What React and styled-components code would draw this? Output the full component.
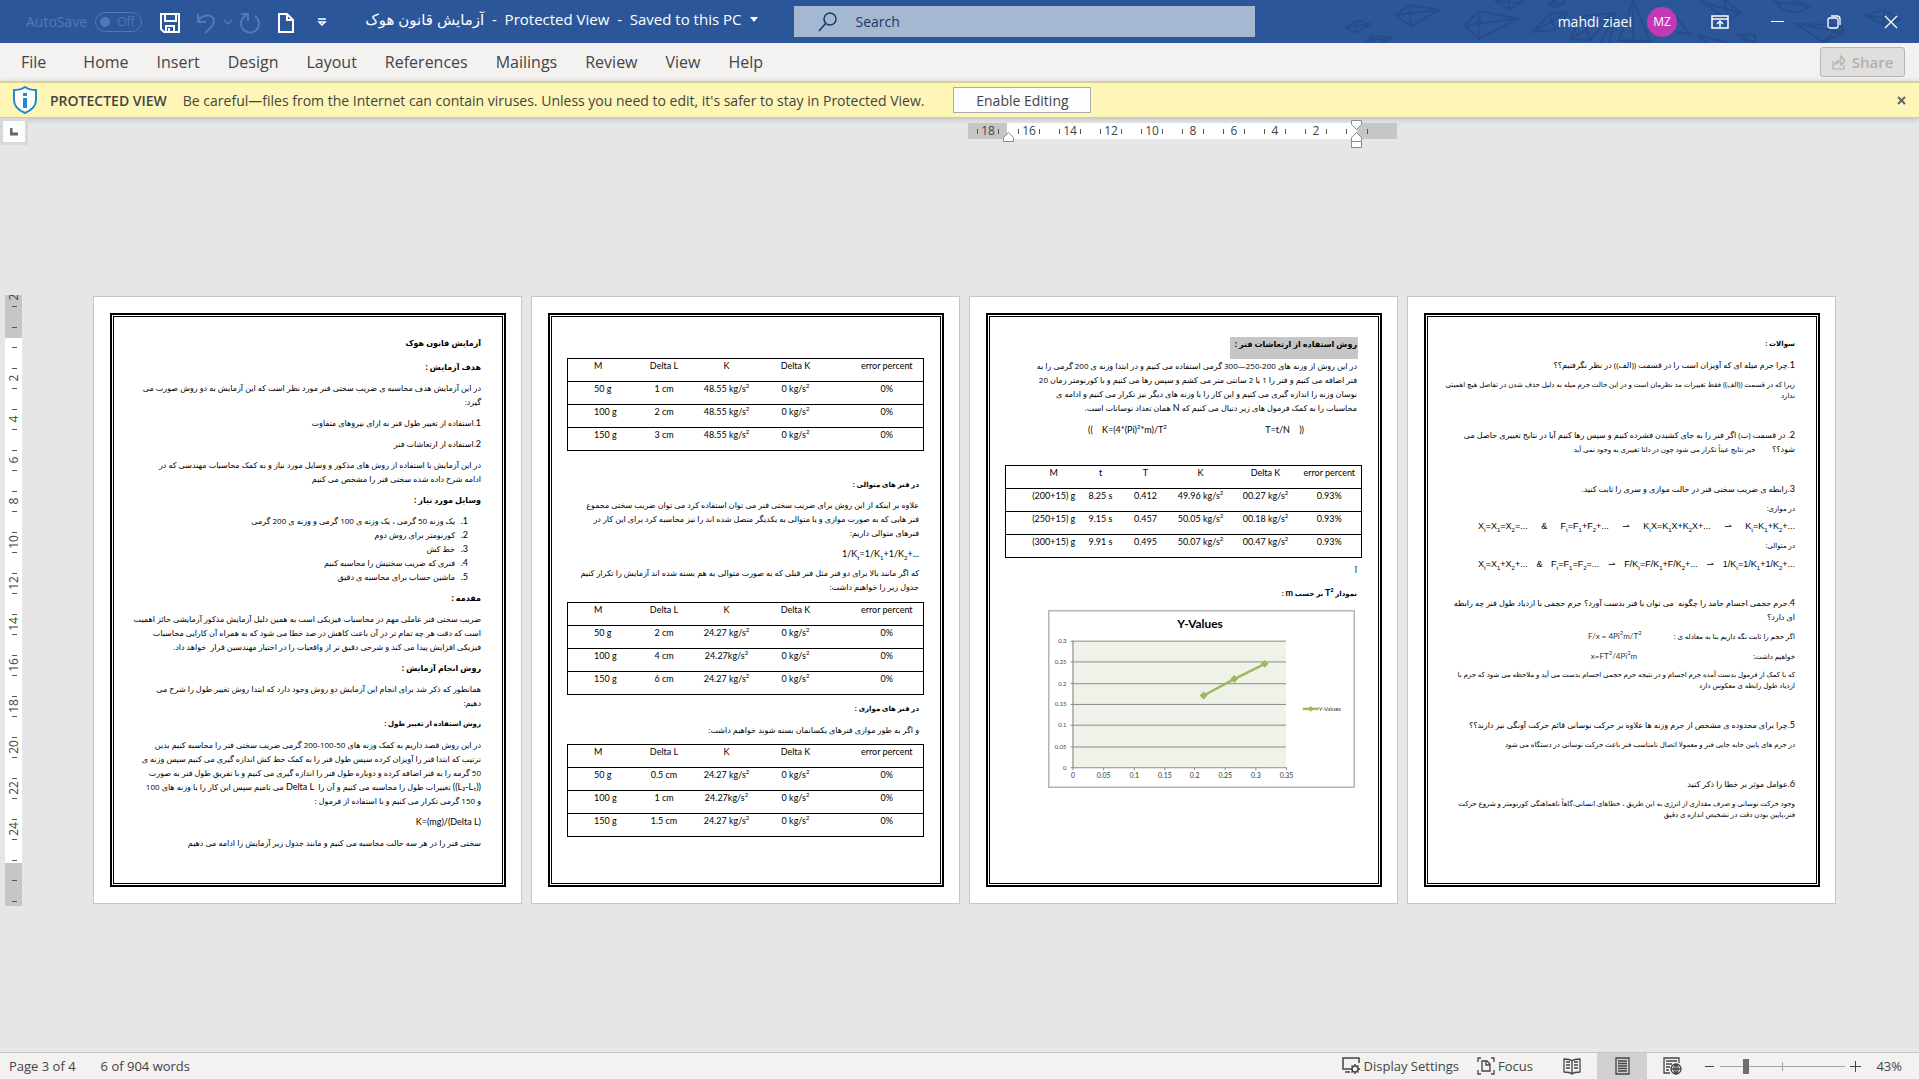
import React, { useState } from 'react';
import styled, { createGlobalStyle } from 'styled-components';

const GlobalStyle = createGlobalStyle`
  * {
    box-sizing: border-box;
  }
  body {
    margin: 0;
    font-family: 'Open Sans', 'DejaVu Sans', sans-serif;
    color: #444;
  }
  button, input {
    font-family: inherit;
    color: inherit;
  }
  p, h2, ol {
    margin: 0;
    padding: 0;
  }
`;

const Window = styled.div`
  display: flex;
  flex-direction: column;
  min-height: 100vh;
  background: #e6e6e6;
`;

/* ---------- title bar ---------- */

const TitleBar = styled.header`
  position: relative;
  display: flex;
  align-items: center;
  height: 43px;
  background: #2b579a;
  color: #fff;
  font-size: 14px;
`;

const Kites = styled.svg`
  position: absolute;
  top: 0;
  right: 0;
  fill: none;
  stroke: #264d89;
  stroke-width: 2;
`;

const LeftSide = styled.div`
  flex: 0 0 41.4%;
  display: flex;
  align-items: center;
  min-width: 0;
`;

const RightSide = styled.div`
  position: relative;
  flex: 1;
  display: flex;
  align-items: center;
  justify-content: flex-end;
`;

const AutoSave = styled.label`
  display: flex;
  align-items: center;
  gap: 8px;
  width: 118px;
  margin-left: 26px;
  color: #5079b5;
`;

const Toggle = styled.button`
  display: flex;
  align-items: center;
  gap: 7px;
  width: 47px;
  height: 20px;
  padding: 0 4px;
  border: 1px solid #5079b5;
  border-radius: 10px;
  background: none;
  color: #5079b5;
  font-size: 12px;

  &::before {
    content: '';
    width: 10px;
    height: 10px;
    border-radius: 50%;
    background: #5079b5;
  }
`;

const QuickTools = styled.div`
  display: flex;
  align-items: center;
  gap: 14px;
  margin-left: 15px;
  padding-top: 2px;
`;

const UndoGroup = styled.div`
  display: flex;
  align-items: center;
  gap: 6px;
`;

const IconButton = styled.button`
  display: flex;
  align-items: center;
  justify-content: center;
  width: ${(props) => props.$width || 22}px;
  height: 24px;
  padding: 0;
  border: none;
  background: none;
  color: ${(props) => (props.$dim ? '#5079b5' : 'inherit')};

  svg {
    fill: none;
    stroke: currentColor;
  }
`;

const DocumentTitle = styled.div`
  display: flex;
  align-items: center;
  gap: 9px;
  margin-left: auto;
  margin-right: 36px;
  padding-bottom: 5px;
  font-size: 15px;
  white-space: pre;
`;

const SearchBox = styled.label`
  display: flex;
  align-items: center;
  gap: 18px;
  width: 24%;
  height: 31px;
  padding: 0 24px;
  background: #a5b8d1;
  color: #19386b;

  svg {
    fill: none;
    stroke: currentColor;
  }

  input {
    flex: 1;
    min-width: 0;
    padding: 0;
    border: none;
    outline: none;
    background: none;
    font-size: 14px;
  }

  input::placeholder {
    color: #19386b;
    opacity: 1;
  }
`;

const Avatar = styled.span`
  display: flex;
  align-items: center;
  justify-content: center;
  width: 30px;
  height: 30px;
  margin: 0 32px 0 15px;
  border-radius: 50%;
  background: #c239b3;
  font-size: 12px;
`;

const WindowButtons = styled.div`
  display: flex;
  gap: 35px;
  margin-right: 17px;
`;

/* ---------- ribbon tabs ---------- */

const TabBar = styled.nav`
  display: flex;
  align-items: center;
  gap: 28px;
  height: 38px;
  padding: 0 14px 0 21px;
  background: #f3f2f1;
`;

const Tab = styled.button`
  padding: 0;
  border: none;
  background: none;
  font-size: 16px;

  &:first-child {
    margin-right: 9px;
  }
`;

const ShareButton = styled.button`
  display: flex;
  align-items: center;
  justify-content: center;
  gap: 6px;
  width: 85px;
  height: 30px;
  margin-left: auto;
  padding: 0;
  border: 1px solid #b8b6b4;
  border-radius: 3px;
  background: #e1dfdd;
  color: #b1afad;
  font-size: 15px;
  font-weight: 600;

  svg {
    fill: none;
    stroke: currentColor;
  }
`;

/* ---------- protected view bar ---------- */

const ProtectedBar = styled.section`
  display: flex;
  align-items: center;
  height: 37px;
  padding: 0 13px;
  border-top: 2px solid #d6d292;
  border-bottom: 1px solid #d2ce86;
  background: #fdf6b6;
  font-size: 14px;
  box-shadow: 0 1px 6px rgba(0, 0, 0, 0.18);
  white-space: nowrap;

  strong {
    margin: 0 16px 0 13px;
    font-weight: 600;
  }
`;

const EnableButton = styled.button`
  width: 138px;
  height: 26px;
  margin-left: 29px;
  padding: 0;
  border: 1px solid #ababab;
  background: #fdfdfd;
  font-size: 14px;
`;

const CloseBar = styled(IconButton)`
  margin-left: auto;
  margin-right: -6px;
  color: #666;
`;

/* ---------- workspace ---------- */

const RulerRow = styled.div`
  display: flex;
  height: 30px;
`;

const TabStop = styled.button`
  display: flex;
  align-items: center;
  justify-content: center;
  width: 28px;
  height: 27px;
  padding: 0;
  border: 3px solid #d9d9d9;
  background: #fdfdfd;
`;

const Sheets = styled.div`
  flex: 1;
  display: grid;
  grid-template-columns: repeat(4, 429px);
  gap: 9px;
  justify-content: center;
  align-content: center;
  padding-right: 12px;
`;

const RulerSheets = styled(Sheets)`
  align-content: start;
  margin-left: -8px;
`;

const HorizontalRuler = styled.svg`
  grid-column: 3;
  overflow: visible;
  margin-top: 2px;
  font-size: 12px;
`;

const VerticalRuler = styled.svg`
  align-self: center;
  margin-left: 5px;
  overflow: hidden;
  font-size: 12px;
`;

const Workspace = styled.main`
  flex: 1;
  display: flex;
`;

const Page = styled.article`
  display: flex;
  min-height: 608px;
  padding: 16px 15px 16px 16px;
  border: 1px solid #c6c6c6;
  background: #fff;
`;

const PageFrame = styled.div`
  flex: 1;
  display: flex;
  flex-direction: column;
  min-width: 0;
  padding: 21px 18px;
  border: 2px solid #000;
  box-shadow: inset 0 0 0 1px #fff, inset 0 0 0 2px #000;
  color: #000;
  font-size: 8px;
`;

const Text = styled.p`
  margin-top: ${(props) => (props.$gap === undefined ? 7 : props.$gap)}px;
  padding: 0 5px;
  font-size: ${(props) => (props.$small ? 7 : 8)}px;
  line-height: ${(props) => (props.$small ? 11 : 14)}px;
  white-space: pre;

  small {
    font-size: 7px;
  }
`;

const Heading = styled.h2`
  margin-top: ${(props) => (props.$gap === undefined ? 7 : props.$gap)}px;
  padding: 0 5px;
  font-size: ${(props) => (props.$big ? 8 : 7)}px;
  line-height: 14px;
  font-weight: bold;
`;

const SelectedHeading = styled(Heading)`
  align-self: flex-start;
  margin: 1px 4px 0 0;
  padding: 0 1px 8px 5px;
  background: #c6c6c6;
`;

const Latin = styled.bdi`
  font-family: Lato, sans-serif;
  font-size: 9px;
`;

const Formula = styled(Text)`
  font-family: ${(props) => (props.$arial ? "'Liberation Sans'" : 'Lato')}, 'DejaVu Sans', sans-serif;
  font-size: 9px;

  sub, sup {
    font-size: 6px;
    line-height: 0;
  }
`;

const FormulaRow = styled(Formula)`
  display: flex;
  justify-content: space-between;
  padding-left: ${(props) => props.$start}px;
  padding-right: ${(props) => props.$end}px;
`;

const LabelledFormula = styled(Text)`
  display: flex;

  span {
    min-width: 155px;
  }

  bdi {
    width: 52px;
    text-align: center;
    font-family: Lato, sans-serif;
    font-size: 8px;
    color: #333;
  }

  sup {
    font-size: 6px;
    line-height: 0;
  }
`;

const Steps = styled.ol`
  margin-top: 7px;
  padding-right: 18px;
  list-style: none;
  counter-reset: step;
  line-height: 14px;

  li {
    display: flex;
    counter-increment: step;
  }

  li::before {
    content: counter(step) '.';
    width: 13px;
    font-family: Lato, sans-serif;
    font-size: 9px;
  }
`;

const DataTable = styled.table`
  width: 100%;
  margin-top: ${(props) => props.$gap}px;
  border: 1px solid #000;
  border-collapse: collapse;
  table-layout: fixed;
  font-family: Lato, sans-serif;
  font-size: 9px;
  line-height: 14px;

  tr {
    border-bottom: 1px solid #000;
  }

  th, td {
    padding: 0 0 8px;
    font-weight: normal;
    text-align: center;
    white-space: nowrap;
  }

  th:last-child, td:last-child {
    padding-left: ${(props) => props.$lastPad}px;
  }

  th:first-child, td:first-child {
    padding-left: ${(props) => props.$firstPad}px;
    text-align: ${(props) => props.$firstAlign};
  }

  sup {
    font-size: 6px;
    line-height: 0;
  }
`;

const ChartBox = styled.svg`
  direction: ltr;
  margin: 9px 7px 0 42px;
  border: 1px solid #b4b4b4;
  outline: 1px solid #d9d9d9;
  outline-offset: -2px;
  font-family: Lato, sans-serif;
  font-size: 6px;
`;

/* ---------- status bar ---------- */

const StatusBar = styled.footer`
  display: flex;
  align-items: center;
  height: 27px;
  padding: 0 17px 0 9px;
  border-top: 1px solid #c8c6c4;
  background: #f3f2f1;
  font-size: 13px;
`;

const StatusText = styled.span`
  margin-right: 25px;
`;

const StatusTools = styled.div`
  display: flex;
  align-items: center;
  margin-left: auto;
`;

const StatusButton = styled.button`
  display: flex;
  align-items: center;
  gap: 3px;
  height: 26px;
  margin-left: ${(props) => props.$gap || 0}px;
  padding: 0;
  border: none;
  background: none;
  font-size: 13px;

  svg {
    fill: none;
    stroke: currentColor;
  }
`;

const ViewButton = styled(StatusButton)`
  justify-content: center;
  width: 50px;
  background: ${(props) => (props.$active ? '#d2d0ce' : 'none')};
`;

const ZoomSlider = styled.input`
  appearance: none;
  width: 125px;
  height: 17px;
  margin: 0 5px;
  background:
    linear-gradient(#a6a6a6, #a6a6a6) center / 1px 9px no-repeat,
    linear-gradient(#a6a6a6, #a6a6a6) center / 100% 1px no-repeat;

  &::-webkit-slider-thumb {
    appearance: none;
    width: 6px;
    height: 15px;
    background: #6f6e6d;
  }
`;

const ZoomValue = styled.span`
  width: 41px;
  text-align: right;
`;

const tabs = ['File', 'Home', 'Insert', 'Design', 'Layout', 'References', 'Mailings', 'Review', 'View', 'Help'];

const hooke = ['M', 'Delta L', 'K', 'Delta K', 'error percent'];

const singleSpring = [
  ['50 g', '1 cm', '48.55 kg/s^', '0 kg/s^', '0%'],
  ['100 g', '2 cm', '48.55 kg/s^', '0 kg/s^', '0%'],
  ['150 g', '3 cm', '48.55 kg/s^', '0 kg/s^', '0%'],
];

const seriesSprings = [
  ['50 g', '2 cm', '24.27 kg/s^', '0 kg/s^', '0%'],
  ['100 g', '4 cm', '24.27kg/s^', '0 kg/s^', '0%'],
  ['150 g', '6 cm', '24.27 kg/s^', '0 kg/s^', '0%'],
];

const parallelSprings = [
  ['50 g', '0.5 cm', '24.27 kg/s^', '0 kg/s^', '0%'],
  ['100 g', '1 cm', '24.27kg/s^', '0 kg/s^', '0%'],
  ['150 g', '1.5 cm', '24.27 kg/s^', '0 kg/s^', '0%'],
];

const vibration = [
  ['(200+15) g', '8.25 s', '0.412', '49.96 kg/s^', '00.27 kg/s^', '0.93%'],
  ['(250+15) g', '9.15 s', '0.457', '50.05 kg/s^', '00.18 kg/s^', '0.93%'],
  ['(300+15) g', '9.91 s', '0.495', '50.07 kg/s^', '00.47 kg/s^', '0.93%'],
];

// "^" at the end of a value stands for a raised 2
const Cell = ({ value }) =>
  value.endsWith('^') ? <>{value.slice(0, -1)}<sup>2</sup></> : value;

const Results = ({ head, rows, widths, ...rest }) => (
  <DataTable dir="ltr" {...rest}>
    <colgroup>
      {widths.map((width, index) => (
        <col key={index} width={width} />
      ))}
    </colgroup>
    <thead>
      <tr>
        {head.map((title) => (
          <th key={title} scope="col">{title}</th>
        ))}
      </tr>
    </thead>
    <tbody>
      {rows.map((row) => (
        <tr key={row[0]}>
          {row.map((value, index) => (
            <td key={index}><Cell value={value} /></td>
          ))}
        </tr>
      ))}
    </tbody>
  </DataTable>
);

const SpringTable = ({ rows, gap }) => (
  <Results
    head={hooke}
    rows={rows}
    widths={[66, 61, 64, 74, 91]}
    $gap={gap}
    $firstPad={26}
    $firstAlign="left"
    $lastPad={18}
  />
);

const TopRuler = () => (
  <HorizontalRuler width="429" height="26" aria-hidden="true">
    <rect x="0" y="3" width="429" height="16" fill="#c6c6c6" />
    <rect x="39" y="3" width="350" height="16" fill="#fff" />
    {[18, 16, 14, 12, 10, 8, 6, 4, 2].map((n, i) => (
      <text key={n} x={20 + i * 41} y="15" textAnchor="middle" fill="#444">{n}</text>
    ))}
    {Array.from({ length: 20 }, (_, i) => (
      <path key={i} d={`M${Math.round(9 + i * 20.5)}.5 9v5`} stroke="#555" />
    ))}
    <path d="M35.500 21.500v-4l5-5 5 5v4z" fill="#fff" stroke="#8a8a8a" />
    <path d="M383.500 .500h10v4l-5 5-5-5z M383.500 21.500v-4l5-5 5 5v4z M383.500 21.500h10v6h-10z" fill="#fff" stroke="#8a8a8a" />
  </HorizontalRuler>
);

const SideRuler = () => (
  <VerticalRuler width="17" height="611" aria-hidden="true">
    <rect width="17" height="611" fill="#c6c6c6" />
    <rect y="43" width="17" height="525" fill="#fff" />
    <text transform="translate(13 2) rotate(-90)" textAnchor="middle" fill="#444">2</text>
    {[2, 4, 6, 8, 10, 12, 14, 16, 18, 20, 22, 24].map((n, i) => (
      <text key={n} transform={`translate(13 ${83 + i * 41}) rotate(-90)`} textAnchor="middle" fill="#444">{n}</text>
    ))}
    {Array.from({ length: 30 }, (_, i) => (
      <path key={i} d={`M7 ${Math.round(11 + i * 20.5)}.5h5`} stroke="#555" />
    ))}
  </VerticalRuler>
);

const Chart = () => {
  const left = 23;
  const top = 30;
  const right = 239;
  const bottom = 158;
  const yLabels = ['0.3', '0.25', '0.2', '0.15', '0.1', '0.05', '0'];
  const xLabels = ['0', '0.05', '0.1', '0.15', '0.2', '0.25', '0.3', '0.35'];
  const points = [[0.215, 0.17], [0.265, 0.209], [0.315, 0.245]].map(([x, y]) => [
    left + (x / 0.35) * (right - left),
    bottom - (y / 0.3) * (bottom - top),
  ]);
  const diamond = ([x, y], r) => `M${x} ${y - r}l${r} ${r}l${-r} ${r}l${-r} ${-r}z`;

  return (
    <ChartBox width="307" height="178" viewBox="0 0 307 178" role="img" aria-label="Y-Values">
      <rect x={left} y={top} width={right - left} height={bottom - top} fill="#eff2e9" />
      <text x="152" y="17" textAnchor="middle" fontSize="12" fontWeight="bold" fill="#000">Y-Values</text>
      {yLabels.map((label, i) => {
        const y = Math.round(top + (i * (bottom - top)) / 6) + 0.5;
        return (
          <g key={label}>
            <path d={`M${left - 2} ${y}H${right}`} stroke="#8c8c8c" />
            <text x="17" y={y + 2} textAnchor="end" fill="#444">{label}</text>
          </g>
        );
      })}
      {xLabels.map((label, i) => {
        const x = Math.round(left + (i * (right - left)) / 7) + 0.5;
        return (
          <g key={label}>
            <path d={`M${x} ${bottom}v3`} stroke="#8c8c8c" />
            <text x={x} y="169" textAnchor="middle" fontSize="7" fill="#333">{label}</text>
          </g>
        );
      })}
      <path d={`M${left + 0.5} ${top}V${bottom}`} stroke="#808080" />
      <polyline points={points.join(' ')} fill="none" stroke="#9bbb59" strokeWidth="2.500" />
      {points.map((point) => (
        <path key={point[0]} d={diamond(point, 4)} fill="#9bbb59" />
      ))}
      <path d="M256 99h16" stroke="#9bbb59" strokeWidth="2.500" />
      <path d={diamond([264, 99], 3)} fill="#9bbb59" />
      <text x="272" y="101" fill="#333">Y-Values</text>
    </ChartBox>
  );
};

const PageOne = () => (
  <Page>
    <PageFrame dir="rtl" lang="fa">
      <Heading $big $gap={0}>آزمایش قانون هوک</Heading>
      <Heading $big $gap={10}>هدف آزمایش :</Heading>
      <Text>در این آزمایش هدف محاسبه ی ضریب سختی فنر مورد نظر است که این آزمایش به دو روش صورت می<br />گیرد:</Text>
      <Text><Latin>1</Latin>.استفاده از تغییر طول فنر به ازای نیروهای متفاوت</Text>
      <Text><Latin>2</Latin>.استفاده از ارتعاشات فنر</Text>
      <Text>در این آزمایش با استفاده از روش های مذکور و وسایل مورد نیاز و به کمک محاسبات مهندسی که در<br />ادامه شرح داده شده سختی فنر را مشخص می کنیم</Text>
      <Heading $big>وسایل مورد نیاز :</Heading>
      <Steps>
        <li>یک وزنه 50 گرمی ، یک وزنه ی 100 گرمی و وزنه ی 200 گرمی</li>
        <li>کورنومتر برای روش دوم</li>
        <li>خط کش</li>
        <li>فنری که ضریب سختیش را محاسبه کنیم</li>
        <li>ماشین حساب برای محاسبه ی دقیق</li>
      </Steps>
      <Heading $big>مقدمه :</Heading>
      <Text>ضریب سختی فنر عاملی مهم در محاسبات فیزیکی است به همین دلیل آزمایش مذکور آزمایشی حائز اهمیت<br />است که دقت هر چه تمام تر در آن باعث کاهش در صد خطا می شود که به همراه آن کارایی محاسبات<br />فیزیکی افزایش پیدا می کند و شرحی دقیق تر از واقعیات را در اختیار مهندسین قرار  خواهد داد.</Text>
      <Heading $big>روش انجام آزمایش :</Heading>
      <Text>همانطور که ذکر شد برای انجام این آزمایش دو روش وجود دارد که ابتدا روش تغییر طول را شرح می<br />دهیم:</Text>
      <Heading>روش استفاده از تغییر طول :</Heading>
      <Text>در این روش قصد داریم به کمک وزنه های 50-100-200 گرمی ضریب سختی فنر را محاسبه کنیم بدین<br />ترتیب که ابتدا فنر را آویزان کرده سپس طول فنر را به کمک خط کش اندازه گیری می کنیم سپس وزنه ی<br />50 گرمه را به فنر اضافه کرده و دوباره طول فنر را اندازه گیری می کنیم و با تفریق طول فنر به صورت<br /><Latin dir="ltr">((L₂-L₁))</Latin> تغییرات طول را محاسبه می کنیم و آن را  <Latin>Delta L</Latin> می نامیم سپس این کار را با وزنه های 100<br />و 150 گرمی تکرار می کنیم و با استفاده از فرمول :</Text>
      <Formula><bdi dir="ltr">K=(mg)/(Delta L)</bdi></Formula>
      <Text>سختی فنر را در هر سه حالت محاسبه می کنیم و مانند جدول زیر آزمایش را ادامه می دهیم</Text>
    </PageFrame>
  </Page>
);

const PageTwo = () => (
  <Page>
    <PageFrame dir="rtl" lang="fa">
      <SpringTable rows={singleSpring} gap={22} />
      <Heading $gap={27}>در فنر های متوالی :</Heading>
      <Text $gap={6}>علاوه بر اینکه از این روش برای ضریب سختی فنر می توان استفاده کرد می توان ضریب سختی مجموع<br />فنر هایی که به صورت موازی و یا متوالی به یکدیگر متصل شده اند را نیز محاسبه کرد برای این کار در<br />فنرهای متوالی داریم:</Text>
      <Formula><bdi dir="ltr">1/K<sub>t</sub>=1/K<sub>1</sub>+1/K<sub>2</sub>+...</bdi></Formula>
      <Text $gap={5}>که اگر مانند بالا برای دو فنر مثل فنر قبلی که به صورت متوالی به هم بسته شده اند آزمایش را تکرار کنیم<br />جدول زیر را خواهیم داشت:</Text>
      <SpringTable rows={seriesSprings} gap={8} />
      <Heading>در فنر های موازی :</Heading>
      <Text>و اگر به طور موازی فنرهای یکسانمان بسته شوند خواهیم داشت:</Text>
      <SpringTable rows={parallelSprings} gap={7} />
    </PageFrame>
  </Page>
);

const PageThree = () => (
  <Page>
    <PageFrame dir="rtl" lang="fa">
      <SelectedHeading $big>روش استفاده از ارتعاشات فنر :</SelectedHeading>
      <Text $gap={0}>در این روش از وزنه های 200-250—300 گرمی استفاده می کنیم و در ابتدا وزنه ی 200 گرمی را به<br />فنر اضافه می کنیم و فنر را 1 یا 2 سانتی متر می کشم و سپس رها می کنیم و با کورنومتر زمان 20<br />نوسان وزنه را اندازه گیری می کنیم و این کار را با وزنه های دیگر نیز تکرار می کنیم و ادامه ی<br />محاسبات را به کمک فرمول های زیر دنبال می کنیم که <Latin>N</Latin> همان تعداد نوسانات است.</Text>
      <FormulaRow dir="ltr" $gap={8} $start={82} $end={58}>
        <span>((    K=(4*(Pi)<sup>2</sup>*m)/T<sup>2</sup></span>
        <span>T=t/N    ))</span>
      </FormulaRow>
      <Results
        head={['M', 't', 'T', 'K', 'Delta K', 'error percent']}
        rows={vibration}
        widths={[72, 46, 44, 66, 64, 64]}
        $gap={28}
        $firstPad={24}
        $firstAlign="center"
        $lastPad={0}
      />
      <Text $gap={5}>آ</Text>
      <Heading $gap={9}>نمودار <Latin>T²</Latin> بر حسب <Latin>m</Latin> :</Heading>
      <Chart />
    </PageFrame>
  </Page>
);

const PageFour = () => (
  <Page>
    <PageFrame dir="rtl" lang="fa">
      <Heading $gap={1}>سوالات :</Heading>
      <Text><Latin>1</Latin>.چرا جرم میله ای که آویزان است را در قسمت ((الف)) در نظر نگرفتیم؟؟</Text>
      <Text $small>زیرا که در قسمت ((الف)) فقط تغییرات مد نظرمان است و در این حالت جرم میله به دلیل حذف شدن در تفاضل هیچ اهمیتی<br />ندارد</Text>
      <Text $gap={27}><Latin>2</Latin>. در قسمت (ب) اگر فنر را به جای کشیدن فشرده کنیم و سپس رها کنیم آیا در نتایج تغییری حاصل می<br />شود؟؟        <small>خیر نتایج عیناً تکرار می شود چون در دلتا تغییری به وجود نمی آید</small></Text>
      <Text $gap={25}><Latin>3</Latin>.رابطه ی ضریب سختی فنر در حالت موازی و سری را ثابت کنید.</Text>
      <Text $small>در موازی:</Text>
      <FormulaRow $arial dir="ltr" $gap={5} $start={34} $end={5}>
        <span>X<sub>t</sub>=X<sub>1</sub>=X<sub>2</sub>=...</span>
        <span>&amp;</span>
        <span>F<sub>t</sub>=F<sub>1</sub>+F<sub>2</sub>+...</span>
        <span>⇀</span>
        <span>K<sub>t</sub>X=K<sub>1</sub>X+K<sub>2</sub>X+...</span>
        <span>⇀</span>
        <span>K<sub>t</sub>=K<sub>1</sub>+K<sub>2</sub>+...</span>
      </FormulaRow>
      <Text $small>در متوالی:</Text>
      <FormulaRow $arial dir="ltr" $gap={6} $start={34} $end={5}>
        <span>X<sub>t</sub>=X<sub>1</sub>+X<sub>2</sub>+...</span>
        <span>&amp;</span>
        <span>F<sub>t</sub>=F<sub>1</sub>=F<sub>2</sub>=...</span>
        <span>⇀</span>
        <span>F/K<sub>t</sub>=F/K<sub>1</sub>+F/K<sub>2</sub>+...</span>
        <span>⇀</span>
        <span>1/K<sub>t</sub>=1/K<sub>1</sub>+1/K<sub>2</sub>+...</span>
      </FormulaRow>
      <Text $gap={25}><Latin>4</Latin>.جرم حجمی اجسام جامد را چگونه  می توان با فنر بدست آورد؟ جرم حجمی با ازدیاد طول فنر چه رابطه<br />ای دارد؟</Text>
      <LabelledFormula as="div" $small>
        <span>اگر حجم را ثابت نگه داریم بنا به معادله ی :</span>
        <bdi dir="ltr">F/x = 4Pi<sup>2</sup>m/T<sup>2</sup></bdi>
      </LabelledFormula>
      <LabelledFormula as="div" $small $gap={9}>
        <span>خواهیم داشت:</span>
        <bdi dir="ltr">x=FT<sup>2</sup>/4Pi<sup>2</sup>m</bdi>
      </LabelledFormula>
      <Text $small>که با کمک از فرمول بدست آمده جرم اجسام و در نتیجه جرم حجمی اجسام بدست می آید و ملاحظه می شود که جرم با<br />ازدیاد طول رابطه ی معکوس دارد</Text>
      <Text $gap={27}><Latin>5</Latin>.چرا برای محدوده ی مشخص از جرم وزنه ها علاوه بر حرکت نوسانی قائم حرکت آونگی نیز دارند؟؟</Text>
      <Text $small>در جرم های پایین جابه جایی فنر و معمولا اتصال نامناسب فنر باعث حرکت نوسانی در دستگاه می شود</Text>
      <Text $gap={27}><Latin>6</Latin>.عوامل موثر بر خطا را ذکر کنید</Text>
      <Text $small>وجود حرکت نوسانی و صرف مقداری از انرژی به این طریق ، خطاهای انسانی،گاهاً ناهماهنگی کورنومتر و شروع حرکت<br />فنر،پایین بودن دقت در تشخیص اندازه ی دقیق</Text>
    </PageFrame>
  </Page>
);

const App = () => {
  const [zoom, setZoom] = useState(19);

  return (
    <Window>
      <GlobalStyle />
      <TitleBar>
        <Kites width="574" height="43" viewBox="65 0 574 43" aria-hidden="true">
          <path d="M66 27l12-7 12 4-15 9zM66 27l24-3M78 20l-3 13" />
          <path d="M115 15l14-10 31 5-29 16zM115 15l45-5M129 5l2 21" />
          <path d="M184 25l16-14 38 8-39 20zM184 25l54-6M200 11l-1 28" />
          <path d="M86 43l6-8 20 3-12 5M92 35l2 8M88 40l24-2" />
          <path d="M214 0l15 9 16-9M229 9V0M216 1l26 2" />
          <path d="M253 32l16-18 19-2-13 18zM253 32l35-20M269 14l6 16" />
          <path d="M267 4l9-4M267 4l9 4 10-8M267 4l18-1" />
          <path d="M290 39l12-23 33-3-25 27zM290 39l45-26M302 16l8 24M335 13l-6 30M335 13l-14 30" />
          <path d="M353 0l-14 40 14 3 17-2zM353 0v43M339 40l31 1" />
          <path d="M392 12l18 22-26-4zM392 12l-1 19" />
          <path d="M420 0l28 20 13-7-16-13M461 13l-33-9M448 20l-4-20" />
          <path d="M494 0l8 9 16 4 12-7-18-6M530 6l-34-4" />
          <path d="M516 24l46 1 2 8-21 9zM516 24l48 9M562 25l-19 17" />
          <path d="M584 15l20-5 16 10-16 5zM584 15l36 5M604 10v15" />
          <path d="M455 34l20 1 1 8M455 34l14 9M457 35l19 8" />
          <path d="M417 35l32 8M417 35l10 8" />
        </Kites>
        <LeftSide>
          <AutoSave>
            AutoSave
            <Toggle disabled>Off</Toggle>
          </AutoSave>
          <QuickTools>
            <IconButton aria-label="Save">
              <svg width="22" height="22" strokeWidth="2">
                <path d="M2 2h18v18H5l-3-3zM6 2v7h11V2M7 20v-6h8v6M10 16v4" />
              </svg>
            </IconButton>
            <UndoGroup>
              <IconButton $dim aria-label="Undo">
                <svg width="20" height="22" strokeWidth="2">
                  <path d="M2 2v8h8M2 10c3-8 15-9 16-1 0 5-5 8-9 12" />
                </svg>
              </IconButton>
              <IconButton $dim $width={10} aria-label="Undo options">
                <svg width="10" height="8" strokeWidth="1.500"><path d="M1 1l4 4 4-4" /></svg>
              </IconButton>
              <IconButton $dim aria-label="Repeat">
                <svg width="22" height="22" strokeWidth="2">
                  <path d="M2 2h7v7M8 3a9 9 0 1 0 8 1" />
                </svg>
              </IconButton>
            </UndoGroup>
            <IconButton aria-label="New document">
              <svg width="18" height="22" strokeWidth="2">
                <path d="M2 2h8l6 6v12H2zM10 2v6h6" />
              </svg>
            </IconButton>
            <IconButton aria-label="Customize Quick Access Toolbar">
              <svg width="10" height="10" strokeWidth="1.500"><path d="M1 1h8M2 4l3 3 3-3z" /></svg>
            </IconButton>
          </QuickTools>
          <DocumentTitle>
            <span>آزمایش قانون هوک  -  Protected View  -  Saved to this PC</span>
            <svg width="8" height="5" fill="#fff"><path d="M0 0h8L4 5z" /></svg>
          </DocumentTitle>
        </LeftSide>
        <SearchBox>
          <svg width="19" height="20" strokeWidth="1.500">
            <circle cx="12" cy="7" r="6" />
            <path d="M8 11l-7 8" />
          </svg>
          <input type="search" placeholder="Search" aria-label="Search" />
        </SearchBox>
        <RightSide>
          mahdi ziaei
          <Avatar>MZ</Avatar>
          <WindowButtons>
            <IconButton aria-label="Ribbon display options">
              <svg width="18" height="14" strokeWidth="1.500">
                <path d="M1 1h16v12H1zM1 4h16M9 12V6M6 9l3-3 3 3" />
              </svg>
            </IconButton>
            <IconButton aria-label="Minimize">
              <svg width="13" height="2" strokeWidth="1"><path d="M0 .500h13" /></svg>
            </IconButton>
            <IconButton aria-label="Restore">
              <svg width="14" height="14" strokeWidth="1.300">
                <rect x="1" y="3" width="10" height="10" rx="2" />
                <path d="M4 1h6a3 3 0 0 1 3 3v6" />
              </svg>
            </IconButton>
            <IconButton aria-label="Close">
              <svg width="14" height="14" strokeWidth="1.300"><path d="M1 1l12 12M13 1L1 13" /></svg>
            </IconButton>
          </WindowButtons>
        </RightSide>
      </TitleBar>

      <TabBar>
        {tabs.map((tab) => (
          <Tab key={tab}>{tab}</Tab>
        ))}
        <ShareButton disabled>
          <svg width="14" height="15" strokeWidth="1.200">
            <path d="M1 6v8h11v-4M3 10c1-4 3-5 6-5V1l4 5-4 4V7c-3 0-5 1-6 3z" />
          </svg>
          Share
        </ShareButton>
      </TabBar>

      <ProtectedBar>
        <svg width="24" height="28" viewBox="0 0 24 28">
          <path d="M12 1c3 2 7 3 11 3v10c0 6-4 10-11 13C5 24 1 20 1 14V4c4 0 8-1 11-3z" fill="#fff" stroke="#1e8bcd" strokeWidth="2" />
          <path d="M10 7h4v3h-4zM10 12h4v10h-4z" fill="#1e8bcd" />
        </svg>
        <strong>PROTECTED VIEW</strong>
        <span>Be careful—files from the Internet can contain viruses. Unless you need to edit, it's safer to stay in Protected View.</span>
        <EnableButton>Enable Editing</EnableButton>
        <CloseBar aria-label="Close message">
          <svg width="9" height="9" strokeWidth="2"><path d="M1 1l7 7M8 1L1 8" /></svg>
        </CloseBar>
      </ProtectedBar>

      <RulerRow>
        <TabStop aria-label="Tab stop">
          <svg width="8" height="8"><path d="M1 0v6h7" fill="none" stroke="#666" strokeWidth="3" /></svg>
        </TabStop>
        <RulerSheets>
          <TopRuler />
        </RulerSheets>
      </RulerRow>

      <Workspace>
        <SideRuler />
        <Sheets>
          <PageOne />
          <PageTwo />
          <PageThree />
          <PageFour />
        </Sheets>
      </Workspace>

      <StatusBar>
        <StatusText>Page 3 of 4</StatusText>
        <StatusText>6 of 904 words</StatusText>
        <StatusTools>
          <StatusButton>
            <svg width="19" height="18" strokeWidth="1.500">
              <path d="M8 12H1V1h16v5M3 15h5" />
              <circle cx="13" cy="12" r="3" />
              <path d="M13 7v2M13 15v2M8 12h2M16 12h2M9.500 8.500l1.500 1.500M15 14l1.500 1.500M16.500 8.500L15 10M11 14l-1.500 1.500" />
            </svg>
            Display Settings
          </StatusButton>
          <StatusButton $gap={18}>
            <svg width="18" height="18" strokeWidth="1.300">
              <path d="M1 5V1h3M14 1h3v4M1 13v4h3M14 17h3v-4M5 4h5l3 3v7H5zM9 4v4h4" />
            </svg>
            Focus
          </StatusButton>
          <ViewButton $gap={14} aria-label="Read mode">
            <svg width="18" height="17" strokeWidth="1.300">
              <path d="M9 3C7 1 4 1 1 1v13c3 0 6 0 8 2 2-2 5-2 8-2V1c-3 0-6 0-8 2zM9 3v13M3 4h4M3 7h4M3 10h4M11 4h4M11 7h4M11 10h4" />
            </svg>
          </ViewButton>
          <ViewButton $active aria-label="Print layout">
            <svg width="15" height="18" strokeWidth="1.300">
              <path d="M1 1h13v16H1zM3 4h9M3 6.500h9M3 9h9M3 11.500h9M3 14h9" />
            </svg>
          </ViewButton>
          <ViewButton aria-label="Web layout">
            <svg width="19" height="18" strokeWidth="1.300">
              <path d="M7 16H1V1h15v5M3 4h11M3 7h6M3 10h4M3 13h3" />
              <circle cx="13" cy="12" r="5" />
              <path d="M8 12h10M13 7v10M13 7c-3 3-3 7 0 10 3-3 3-7 0-10" />
            </svg>
          </ViewButton>
          <StatusButton $gap={7} aria-label="Zoom out">
            <svg width="11" height="11"><path d="M1 5.500h9" /></svg>
          </StatusButton>
          <ZoomSlider
            type="range"
            min="0"
            max="100"
            value={zoom}
            aria-label="Zoom"
            onChange={(e) => setZoom(e.target.value)}
          />
          <StatusButton aria-label="Zoom in">
            <svg width="11" height="11"><path d="M0 5.500h11M5.500 0v11" /></svg>
          </StatusButton>
          <ZoomValue>43%</ZoomValue>
        </StatusTools>
      </StatusBar>
    </Window>
  );
};

export default App;
